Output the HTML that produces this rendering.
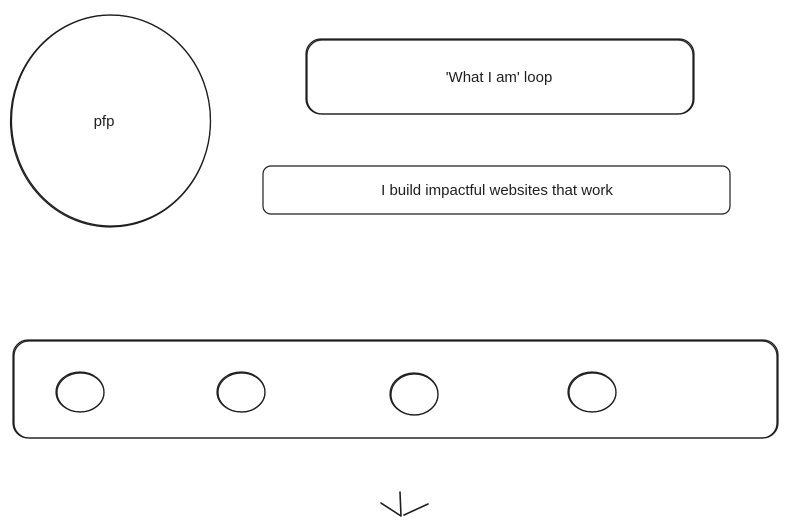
<!DOCTYPE html>
<html><head><style>
html,body{margin:0;padding:0;background:#fff;width:788px;height:527px;overflow:hidden}
svg{display:block}
text{font-family:"Liberation Sans",sans-serif;font-size:15px;fill:#1e1e1e}
</style></head><body>
<svg width="788" height="527" viewBox="0 0 788 527" fill="none" stroke="#1e1e1e" stroke-width="1.2" stroke-linecap="round">
<ellipse cx="110.5" cy="121" rx="100" ry="106"/>
<ellipse cx="111" cy="120.5" rx="99.5" ry="105.5"/>
<text x="104" y="126" text-anchor="middle" stroke="none">pfp</text>
<rect x="306" y="39" width="388" height="75" rx="15"/>
<rect x="307" y="40" width="386" height="74" rx="15"/>
<text x="499" y="82" text-anchor="middle" stroke="none">'What I am' loop</text>
<rect x="263" y="166" width="467" height="48" rx="8"/>
<text x="497" y="195" text-anchor="middle" stroke="none">I build impactful websites that work</text>
<rect x="13" y="340" width="765" height="98" rx="15"/>
<rect x="14" y="341" width="763" height="97" rx="15"/>
<ellipse cx="80" cy="392" rx="24" ry="20"/><ellipse cx="80.5" cy="392.5" rx="23.5" ry="19.5"/>
<ellipse cx="241" cy="392" rx="24" ry="20"/><ellipse cx="241.5" cy="392.5" rx="23.5" ry="19.5"/>
<ellipse cx="414" cy="394" rx="24" ry="21"/><ellipse cx="414.5" cy="394.5" rx="23.5" ry="20.5"/>
<ellipse cx="592" cy="392" rx="24" ry="20"/><ellipse cx="592.5" cy="392.5" rx="23.5" ry="19.5"/>
<path d="M400 492 L401 516 M381 503 L401 516 M428 504 L404 515" stroke-width="1.6"/>
</svg>
</body></html>
